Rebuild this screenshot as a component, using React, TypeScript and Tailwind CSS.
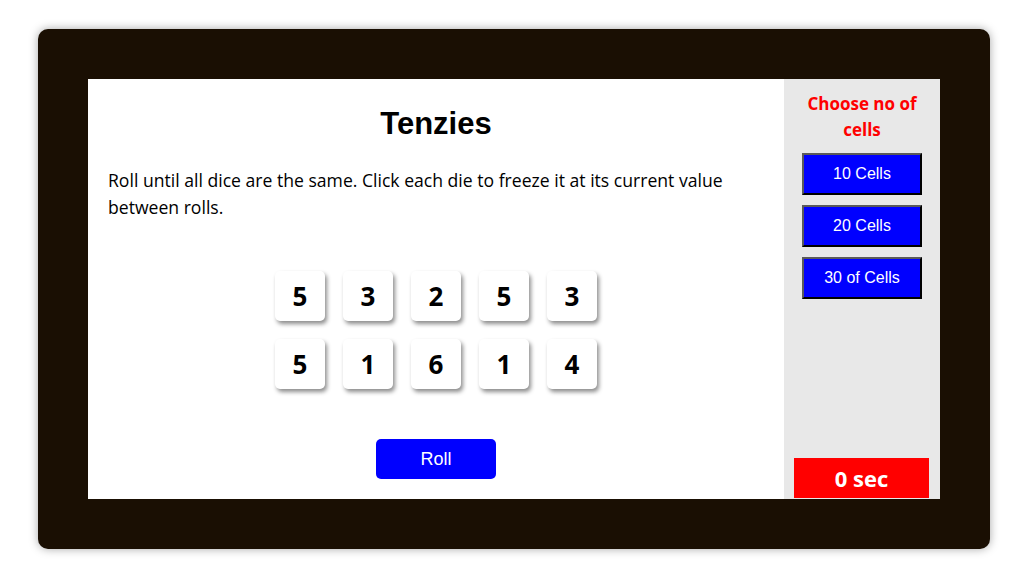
const DICE = [5, 3, 2, 5, 3, 5, 1, 6, 1, 4];
const CELL_OPTIONS = ['10 Cells', '20 Cells', '30 of Cells'];

function Die({ value }: { value: number }) {
  return (
    <div className="flex h-[50px] w-[50px] items-center justify-center rounded-[5px] bg-white font-['Noto_Sans',sans-serif] text-[26px] font-bold text-black shadow-[2px_3px_4px_rgba(0,0,0,0.45)]">
      {value}
    </div>
  );
}

export default function App() {
  return (
    <div className="min-h-[581px] bg-white pl-[38px] pt-[29px]">
      <div className="flex h-[520px] w-[952px] rounded-[10px] bg-[#1a0f03] p-[50px] shadow-[0_0_10px_rgba(0,0,0,0.35)]">
        <main className="flex flex-1 flex-col bg-white px-5 font-['Open_Sans',sans-serif] text-black">
          <h1 className="mt-[26px] text-center font-['Liberation_Sans',sans-serif] text-[31px] font-bold leading-[37px]">Tenzies</h1>
          <p className="mt-[25px] text-[17.6px] leading-[27px]">
            Roll until all dice are the same. Click each die to freeze it at its current value between rolls.
          </p>
          <div className="mt-[50px] grid grid-cols-5 gap-[18px] self-center">
            {DICE.map((v, i) => (
              <Die key={i} value={v} />
            ))}
          </div>
          <button className="mt-[50px] h-10 w-[120px] self-center rounded-[5px] bg-[#0000ff] font-['Liberation_Sans',sans-serif] text-[18px] text-white">
            Roll
          </button>
        </main>
        <aside className="flex w-[156px] flex-col items-center bg-[#e8e8e8]">
          <h2 className="mt-[12px] w-[130px] text-center font-['Open_Sans',sans-serif] text-[17px] font-bold leading-[26px] text-[#ff0000]">
            Choose no of cells
          </h2>
          <div className="mt-[10px] flex flex-col gap-[10px]">
            {CELL_OPTIONS.map((label) => (
              <button
                key={label}
                className="h-[42px] w-[120px] border-2 border-b-black border-l-[#5a5a5a] border-r-black border-t-[#5a5a5a] bg-[#0000ff] font-['Liberation_Sans',sans-serif] text-[16px] text-white"
              >
                {label}
              </button>
            ))}
          </div>
          <div className="mb-px ml-[10px] mt-auto flex h-10 w-[135px] items-center justify-center self-start bg-[#ff0000] font-['Open_Sans',sans-serif] text-[22px] font-bold text-white">
            0 sec
          </div>
        </aside>
      </div>
    </div>
  );
}
